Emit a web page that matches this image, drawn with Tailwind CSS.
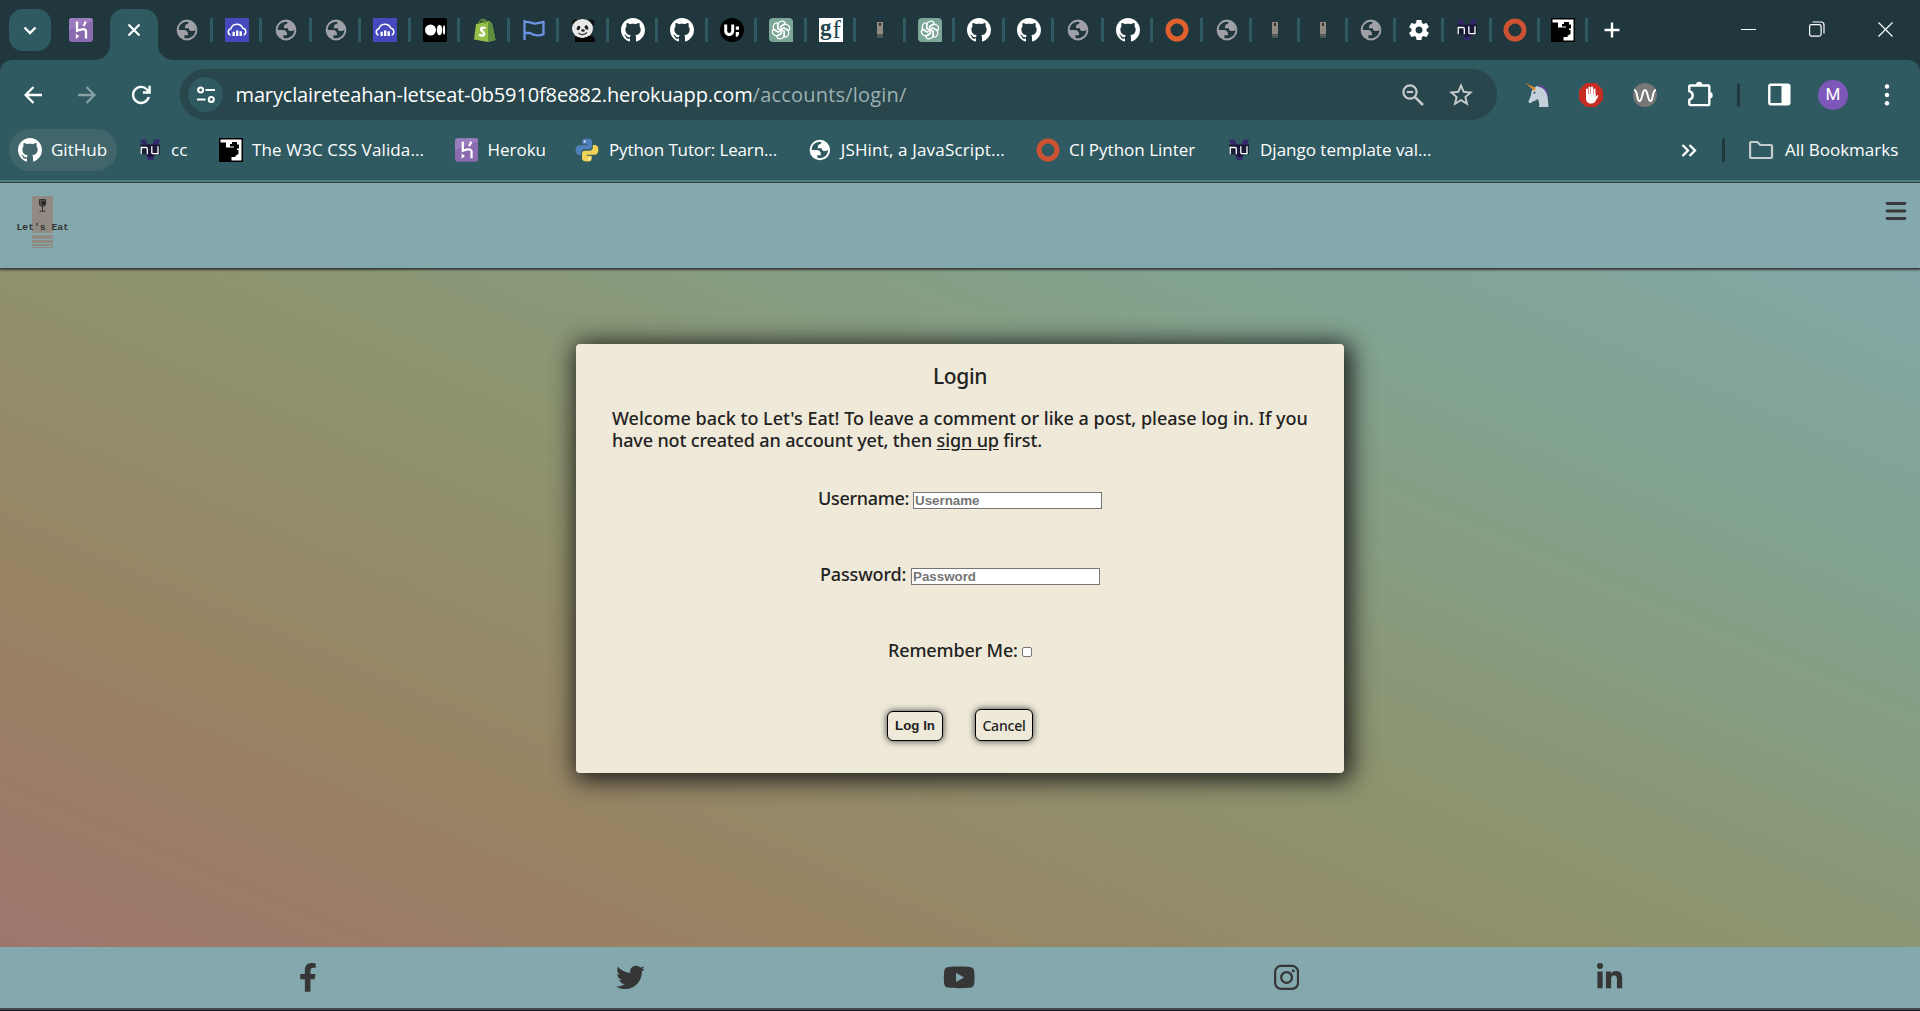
<!DOCTYPE html>
<html lang="en">
<head>
<meta charset="utf-8">
<title>Let's Eat - Login</title>
<script src="https://cdn.jsdelivr.net/npm/@tailwindcss/browser@4"></script>
</head>
<body class="h-[1011px] w-[1920px] overflow-hidden bg-[#1f373d] flex flex-col">

<svg class="hidden">
  <symbol id="heroku" viewBox="0 0 24 24"><rect width="24" height="24" rx="3" fill="#8a6bb0"/><path d="M0 12V3a3 3 0 0 1 3-3h18a3 3 0 0 1 3 3z" fill="#9b7dbd"/><path d="M8 3.500v9.200c2.200-1 9-3 9 .8v7M16.500 3.500c-.2 2-1 3.300-2.200 4.500" fill="none" stroke="#fff" stroke-width="2.300"/><path d="M6.800 15.500l3.400 2.700-3.400 2.700z" fill="#fff"/></symbol>
  <symbol id="globe" viewBox="1.400 1.400 21.200 21.200"><path fill="currentColor" fill-rule="evenodd" d="M12 2a10 10 0 1 0 0 20 10 10 0 0 0 0-20zM4 12h4.400c3.407.022 4.922 1.730 4.543 5.127H9.488v2.470a8.004 8.004 0 0 0 10.498-8.083C19.327 12.504 18.332 13 17 13c-2.137 0-3.206-.916-3.206-2.750h-3.748c-.274-2.728.683-4.092 2.870-4.092 0-.975.327-1.597.811-1.970A8.004 8.004 0 0 0 4 12z"/></symbol>
  <symbol id="cloud" viewBox="0 0 24 24"><rect width="24" height="24" fill="#4549bd"/><path d="M5.500 17a3.200 3.200 0 0 1 .4-6.200A6.300 6.300 0 0 1 17.800 10.300a3.500 3.500 0 0 1 .9 6.700" fill="none" stroke="#fff" stroke-width="1.500"/><path d="M7.500 13.700h2.400v4.200H7.500zM11 12.500h2.400v5.400H11zM14.500 13.200h2.400v4.700h-2.400z" fill="#fff"/></symbol>
  <symbol id="medium" viewBox="0 0 24 24"><rect width="24" height="24" rx="2" fill="#000"/><circle cx="7.500" cy="12" r="5.500" fill="#fff"/><ellipse cx="16.500" cy="12" rx="2.700" ry="5.300" fill="#fff"/><ellipse cx="21" cy="12" rx="1.100" ry="4.800" fill="#fff"/></symbol>
  <symbol id="shopify" viewBox="0 0 24 24"><path d="M4 6l13-3 3 2.500L23.500 22 16 24 2 21.500z" fill="#95bf47"/><path d="M16 4l4 1.500L23.500 22 16 24z" fill="#5e8e3e"/><path d="M7 6c0-4 5-7 6-3v3M10 5c1-4 4-4 5-.5" fill="none" stroke="#5e8e3e" stroke-width="1.200"/><path d="M13.500 10.200c-3-1.300-4.700 0-4.500 1.500.2 1.600 3.400 2 3.200 4.200-.2 2-2.700 2.200-5 .6" fill="none" stroke="#fff" stroke-width="2.400"/></symbol>
  <symbol id="flag" viewBox="0 0 24 24"><path d="M2.500 2v20M2.500 4.500c4-2 7 1.500 11 1 3-.3 5-1 8-1.500v12c-5 3-7.500 1-11 .3-1.500-.3-1.500-1-2-1.300H2.500" fill="none" stroke="#6c92e2" stroke-width="2.300"/></symbol>
  <symbol id="panda" viewBox="0 0 24 24"><circle cx="4" cy="4.500" r="3" fill="#111"/><circle cx="20" cy="5" r="3.500" fill="#111"/><ellipse cx="11.500" cy="10.500" rx="10.500" ry="9.500" fill="#e8e8e8"/><ellipse cx="7.500" cy="10" rx="1.700" ry="2.400" fill="#222" transform="rotate(30 7.500 10)"/><ellipse cx="15.500" cy="9.500" rx="1.700" ry="2.400" fill="#222" transform="rotate(-30 15.500 9.500)"/><ellipse cx="12" cy="12.500" rx="1.800" ry="1.200" fill="#222"/><path d="M7.500 15c2.500 2.300 6 2 8.500-.5" fill="none" stroke="#333" stroke-width="1.300"/><path d="M4 18c4 3 10 2.500 14 0 3-1 6 0 6 6H4z" fill="#050505"/></symbol>
  <symbol id="github" viewBox="0 0 16 16"><path fill="#fff" d="M8 0C3.580 0 0 3.580 0 8c0 3.540 2.290 6.530 5.470 7.590.4.070.55-.17.55-.38 0-.19-.01-.82-.01-1.490-2.010.37-2.530-.49-2.690-.94-.09-.23-.48-.94-.82-1.130-.28-.15-.68-.52-.01-.53.63-.01 1.080.58 1.230.82.72 1.210 1.870.87 2.330.66.07-.52.28-.87.51-1.070-1.780-.2-3.640-.89-3.640-3.950 0-.87.31-1.590.82-2.150-.08-.2-.36-1.020.08-2.120 0 0 .67-.21 2.200.82.64-.18 1.320-.27 2-.27s1.360.09 2 .27c1.530-1.040 2.200-.82 2.200-.82.44 1.100.16 1.920.08 2.120.51.56.82 1.270.82 2.150 0 3.070-1.870 3.750-3.650 3.950.29.25.54.73.54 1.480 0 1.070-.01 1.930-.01 2.200 0 .21.15.46.55.38A8.010 8.010 0 0 0 16 8c0-4.420-3.580-8-8-8z"/></symbol>
  <symbol id="uicon" viewBox="0 0 24 24"><circle cx="12" cy="12" r="12" fill="#000"/><path d="M5.700 6.500v6.500c0 4.500 7 4.500 7 0V6.500" fill="none" stroke="#fff" stroke-width="3"/><path d="M15.800 8.500h3.200v3.200h-3.200zM15.800 14h3.200v2.500l-1.500 2.300h-1.700z" fill="#fff"/></symbol>
  <symbol id="gpt" viewBox="0 0 24 24"><path d="M4 0h16a4 4 0 0 1 4 4v20H4a4 4 0 0 1-4-4V4a4 4 0 0 1 4-4z" fill="#7ba698"/><g fill="none" stroke="#fff" stroke-width="1.250"><path id="petal" d="M9 11.800V7.200c0-4.700 6.300-5.300 7.200-1.600L11.800 8.200v5.300"/><use href="#petal" transform="rotate(60 12 12)"/><use href="#petal" transform="rotate(120 12 12)"/><use href="#petal" transform="rotate(180 12 12)"/><use href="#petal" transform="rotate(240 12 12)"/><use href="#petal" transform="rotate(300 12 12)"/></g></symbol>
  <symbol id="gf" viewBox="0 0 24 24"><rect width="24" height="24" fill="#fff"/><text x="1" y="17" font-family="Liberation Serif, serif" font-size="23" font-weight="700" fill="#22454c">g</text><text x="13.500" y="19.500" font-family="Liberation Serif, serif" font-size="25" fill="#22454c">f</text></symbol>
  <symbol id="bottle" viewBox="0 0 24 24"><path d="M9 4h6v12H9z" fill="#918a82"/><path d="M9 16.500h6v1.200H9zM9 18.400h6v1H9z" fill="#77746f"/><path d="M11 5h2v3h-2z" fill="#333"/></symbol>
  <symbol id="ring" viewBox="0 0 24 24"><circle cx="12" cy="12" r="9" fill="none" stroke="currentColor" stroke-width="5"/></symbol>
  <symbol id="gear" viewBox="1.600 1.600 20.800 20.800"><path fill="#fff" d="M19.430 12.980c.04-.32.07-.64.07-.98s-.03-.66-.07-.98l2.110-1.650c.19-.15.24-.42.12-.64l-2-3.460c-.12-.22-.39-.3-.61-.22l-2.490 1c-.52-.4-1.080-.73-1.690-.98l-.38-2.650A.488.488 0 0 0 14 2h-4c-.25 0-.46.18-.49.42l-.38 2.650c-.61.25-1.170.59-1.690.98l-2.490-1c-.23-.09-.49 0-.61.22l-2 3.460c-.13.22-.07.49.12.64l2.110 1.650c-.04.32-.07.65-.07.98s.03.66.07.98l-2.110 1.650c-.19.15-.24.42-.12.64l2 3.460c.12.22.39.3.61.22l2.490-1c.52.4 1.080.73 1.690.98l.38 2.650c.03.24.24.42.49.42h4c.25 0 .46-.18.49-.42l.38-2.650c.61-.25 1.170-.59 1.690-.98l2.490 1c.23.09.49 0 .61-.22l2-3.460c.12-.22.07-.49-.12-.64l-2.110-1.650zM12 15.500c-1.930 0-3.500-1.570-3.500-3.500s1.570-3.500 3.500-3.500 3.500 1.570 3.500 3.500-1.570 3.500-3.500 3.500z"/></symbol>
  <symbol id="nu" viewBox="0 0 24 24"><path d="M2 1.500h5.500l2 5h5l2-5H22L15 22h-5z" fill="#33286b"/><path d="M2 6.500h20v10h-5.500l-2 2.500h-4l-2-2.500H2z" fill="#111325" opacity=".75"/><path d="M3.200 16.300V9.500h4.900c.9 0 1.200.3 1.200 1.200v5.600M13.800 8.200v6.200c0 .9.300 1.200 1.200 1.200h5V8.200" fill="none" stroke="#fff" stroke-width="1.300"/></symbol>
  <symbol id="w3c" viewBox="0 0 24 24"><rect width="24" height="24" fill="#000"/><path d="M1.500 1.500h21v21H12.500v-3.500h4v-1.500l3-1.500v-4h-1.500v-1.500H20V6.500h-2V4h-5v2h-2v2.500h4v1H7V4.500H1.500z" fill="#fff"/><path d="M13 11h5v6l-4 1h-3z" fill="#000"/></symbol>
  <symbol id="python" viewBox="0 0 24 24"><path d="M11.800.5C7.500.5 7.300 2 7.300 3.500v2.700h5v1H4.500C2.200 7.200.6 8.800.6 12s1.400 4.900 3.400 4.900h2.200v-2.700c0-1.700 1.500-3 3.300-3h5c1.500 0 2.500-1.100 2.500-2.600V3.500c0-2-1.800-3-5.200-3z" fill="#4f7fb8"/><path d="M12.200 23.500c4.300 0 4.500-1.500 4.500-3v-2.700h-5v-1h7.800c2.300 0 3.900-1.600 3.900-4.800s-1.400-4.900-3.400-4.900h-2.200v2.700c0 1.700-1.500 3-3.300 3h-5C8 12.800 7 13.900 7 15.400v5.100c0 2 1.800 3 5.200 3z" fill="#f0d356"/><circle cx="9.600" cy="3.500" r="1" fill="#fff"/><circle cx="14.400" cy="20.500" r="1" fill="#fff"/></symbol>
</svg>

<!-- Tab strip -->
<div class="h-[60px] shrink-0 flex items-center bg-[#1f373d]">
  <div class="ml-[9px] size-[42px] rounded-[14px] bg-[#2f5a61] flex items-center justify-center">
    <svg class="size-[18px]" viewBox="0 0 18 18" fill="none" stroke="#fff" stroke-width="2.400"><path d="M3.500 6.500L9 12l5.500-5.500"/></svg>
  </div>
  <svg class="size-6 ml-[18px]"><use href="#heroku"/></svg>
  <div class="relative ml-[17px] w-12 h-[51px] self-end rounded-t-[14px] bg-[#2f5a61] flex items-center justify-center">
    <svg class="absolute -left-[15px] bottom-0 size-[15px]" viewBox="0 0 15 15"><path d="M15 0v15H0A15 15 0 0 0 15 0z" fill="#2f5a61"/></svg>
    <svg class="absolute -right-[15px] bottom-0 size-[15px]" viewBox="0 0 15 15"><path d="M0 0v15h15A15 15 0 0 1 0 0z" fill="#2f5a61"/></svg>
    <svg class="size-[14px] mb-[9px] -ml-px" viewBox="0 0 14 14" stroke="#fff" stroke-width="2.200"><path d="M1.500 1.500l11 11M12.500 1.500l-11 11"/></svg>
  </div>
  <div id="tabs" class="ml-[5px] flex text-[#9fa1a6]"></div>
  <svg class="ml-[16px] size-4" viewBox="0 0 16 16" stroke="#fff" stroke-width="2.400"><path d="M8 .5v15M.5 8h15"/></svg>
  <div class="ml-auto mr-[27px] flex items-center gap-[53px] pb-0.5">
    <svg class="size-[15px]" viewBox="0 0 15 15" stroke="#fff"><path d="M0 7.500h15"/></svg>
    <svg class="size-[16px]" viewBox="0 0 16 16" fill="none" stroke="#fff" stroke-width="1.200"><rect x=".6" y="3.600" width="11.500" height="11.500" rx="1.800"/><path d="M3.500 1h8.500a3 3 0 0 1 3 3v8.500"/></svg>
    <svg class="size-[15px]" viewBox="0 0 15 15" stroke="#fff" stroke-width="1.200"><path d="M.5.500l14 14M14.500.500l-14 14"/></svg>
  </div>
</div>

<!-- Toolbar and bookmarks -->
<div class="h-[120px] shrink-0 rounded-t-[12px] bg-[#2f5a61] font-['Open_Sans',sans-serif] text-white">
  <div class="h-[69px] flex items-center">
    <svg class="ml-[24px] size-[18px]" viewBox="0 0 18 18" fill="none" stroke="#fff" stroke-width="2.300"><path d="M18 9H2M9.500 1L1.600 9l7.900 8"/></svg>
    <svg class="ml-[36px] size-[18px]" viewBox="0 0 18 18" fill="none" stroke="#86a0a4" stroke-width="2.300"><path d="M0 9h16M8.500 1l7.900 8-7.900 8"/></svg>
    <svg class="ml-[35px] size-5" viewBox="0 0 20 20" fill="none" stroke="#fff" stroke-width="2.400"><path d="M17.800 12A8 8 0 1 1 16 4.500l2 2"/><path d="M18.600.8v6.700h-6.700" /></svg>
    <div class="ml-[29px] w-[1317px] h-[51px] rounded-full bg-[#28464b] flex items-center pl-2">
      <div class="size-[35px] rounded-full bg-[#2f5a61] flex items-center justify-center">
        <svg class="size-[18px]" viewBox="0 0 18 18" fill="none" stroke="#fff" stroke-width="2.100"><circle cx="3.600" cy="4" r="2.500"/><path d="M8.500 4H18M0 13.500h8.500"/><circle cx="14.300" cy="13.500" r="2.500"/></svg>
      </div>
      <div class="ml-[12.500px] text-[20px] whitespace-nowrap flex"><span class="tracking-[-0.140px]">maryclaireteahan-letseat-0b5910f8e882.herokuapp.com</span><span class="text-[#9db1b4] tracking-[0.200px]">/accounts/login/</span></div>
      <svg class="ml-auto size-[22px]" viewBox="0 0 22 22" fill="none" stroke="#c7cbcc" stroke-width="2.200"><circle cx="8" cy="8" r="6.600"/><path d="M12.800 12.800l8.200 8.200" stroke-width="2.500"/><path d="M4.800 8h6.400"/></svg>
      <svg class="ml-[25px] mr-[24px] size-6" viewBox="0 0 24 24"><path fill="#c7cbcc" d="M22 9.240l-7.190-.62L12 2 9.190 8.630 2 9.240l5.460 4.730L5.820 21 12 17.270 18.180 21l-1.630-7.030L22 9.240zM12 15.400l-3.760 2.270 1-4.280-3.320-2.880 4.380-.38L12 6.100l1.710 4.040 4.380.38-3.320 2.880 1 4.280L12 15.400z" transform="translate(-2.400 -2.400) scale(1.200)"/></svg>
    </div>
    <svg class="ml-[28px] size-6" viewBox="0 0 24 24"><path d="M14 2c6 1 9 5 9.500 14l-4-3-5-9z" fill="#6b3fa0"/><path d="M9 5l3-2 5 2c5 3 6 8 6.500 19H14c.5-4 0-6-1.500-8-2 2-4.500 2-6 3.500-1.500 1-3 .5-3-1l2.500-6C6 9 7 7 9 5z" fill="#c4d1db"/><path d="M10 8l-10-8 10.500 5z" fill="#f08a24"/><circle cx="9.500" cy="9.800" r="1" fill="#2f4550"/></svg>
    <svg class="ml-[30px] size-6" viewBox="0 0 24 24"><path d="M7 0h10l7 7v10l-7 7H7l-7-7V7z" fill="#c72e23"/><g stroke="#fff" stroke-width="2" stroke-linecap="round"><path d="M8 13V6.500M10.500 12V4.500M13 12V4.500M15.500 13V6.500"/></g><path d="M7 11h9.500v3l1.300-1.500c1-.8 1.800 0 1.300 1l-2.800 5c-1 1.500-2.500 2-4.300 2-3.500 0-5-2.300-5-5z" fill="#fff"/></svg>
    <svg class="ml-[30px] size-6" viewBox="0 0 24 24"><circle cx="12" cy="12" r="12" fill="#777"/><path d="M1 7c4 0 2.500 11 5.500 11S9 7 12 7s2.500 11 5.500 11S19 7 23 7" fill="none" stroke="#fff" stroke-width="2"/></svg>
    <svg class="ml-[30px] size-[26px] -mt-0.5" viewBox="0 0 26 26" fill="none" stroke="#fff" stroke-width="2.400"><path d="M3.500 4.500h18a.8.8 0 0 1 .8.800v18a.8.8 0 0 1-.8.800h-18a1.200 1.200 0 0 1-1.200-1.200v-4c4.500-1.500 4.500-7.200 0-8.700v-4a1.200 1.200 0 0 1 1.200-1.700z"/><path d="M9 4a3.200 3.200 0 0 1 6.400 0zM22.500 11a3.200 3.200 0 0 1 0 6.400z" fill="#fff" stroke="none"/></svg>
    <div class="ml-[24px] h-6 w-[3px] rounded bg-[#1f373d]"></div>
    <svg class="ml-[28px] size-[23px]" viewBox="0 0 23 23"><rect x="1.300" y="1.800" width="20" height="19.500" rx="1.500" fill="none" stroke="#fff" stroke-width="2.400"/><path d="M13.500 2h8v19h-8z" fill="#fff"/></svg>
    <div class="ml-[27px] size-[30px] rounded-full bg-[#7e57ba] flex items-center justify-center font-['Roboto',sans-serif] text-[17px]">M</div>
    <svg class="ml-[27px] size-6" viewBox="0 0 24 24" fill="#fff"><circle cx="12" cy="3.500" r="2.200"/><circle cx="12" cy="12" r="2.200"/><circle cx="12" cy="20.300" r="2.200"/></svg>
  </div>
  <div class="h-[42px] flex items-center text-[17px] whitespace-nowrap">
    <div class="ml-[9px] w-[108px] h-[42px] rounded-full bg-[#40666c] flex items-center pl-[9px] gap-[9px]"><svg class="size-6"><use href="#github"/></svg>GitHub</div>
    <div class="ml-[21px] w-[50px] flex items-center gap-[9px]"><svg class="size-6"><use href="#nu"/></svg>cc</div>
    <div class="ml-[31px] w-[206px] flex items-center gap-[9px] tracking-[0.130px]"><svg class="size-6"><use href="#w3c"/></svg>The W3C CSS Valida...</div>
    <div class="ml-[30px] w-[91px] flex items-center gap-[9px]"><svg class="size-6"><use href="#heroku"/></svg>Heroku</div>
    <div class="ml-[29px] w-[202px] flex items-center gap-[10px] tracking-[-0.130px]"><svg class="size-6"><use href="#python"/></svg>Python Tutor: Learn...</div>
    <div class="ml-[31px] w-[197px] flex items-center gap-[9px] tracking-[0.170px]"><svg class="size-6 p-px"><use href="#globe"/></svg>JSHint, a JavaScript...</div>
    <div class="ml-[31px] w-[161px] flex items-center gap-[9px]"><svg class="size-6 text-[#cb5333]"><use href="#ring"/></svg>CI Python Linter</div>
    <div class="ml-[30px] w-[206px] flex items-center gap-[9px]"><svg class="size-6"><use href="#nu"/></svg>Django template val...</div>
    <svg class="ml-auto w-[16px] h-[13px]" viewBox="0 0 16 13" fill="none" stroke="#fff" stroke-width="2.300"><path d="M1.500 1L7 6.500 1.500 12M8.500 1L14 6.500 8.500 12"/></svg>
    <div class="ml-[25px] h-6 w-[3px] rounded bg-[#1f373d]"></div>
    <svg class="ml-[23px] w-[26px] h-[20px]" viewBox="0 0 26 20" fill="none" stroke="#c7cbcc" stroke-width="2.200"><path d="M3.300 2h6l3 3h10.500c.8 0 1.200.4 1.200 1.200v10.600c0 .8-.4 1.200-1.200 1.200H3.300c-.8 0-1.200-.4-1.200-1.200V3.200c0-.8.400-1.200 1.200-1.200z"/></svg>
    <div class="ml-[11px] w-[113px] mr-[22px]">All Bookmarks</div>
  </div>
</div>

<!-- Page -->
<div class="h-[2px] shrink-0 bg-[#4f7f87]"></div>
<div class="grow flex flex-col bg-[linear-gradient(to_top_right,#a0736f_0%,#998363_25%,#8d946f_50%,#82a38f_75%,#83a8ad_100%)]">
  <header class="h-[87px] shrink-0 flex justify-between border-t border-b border-[#3c3c3c] bg-[#83a8ad] shadow-[0_1px_2px_#3c3c3c]">
    <svg class="ml-[16px] mt-[13px] w-[54px] h-[52px]" viewBox="0 0 54 52">
      <path d="M16 0h21v37H16zM16 39h21v4H16zM16 44h21v3H16zM16 48h21v2H16zM16 51h21v1H16z" fill="#918a82"/>
      <path d="M23.500 3.500h6v4.500c0 1.500-1.200 2.500-3 2.500s-3-1-3-2.500z" fill="#555350" stroke="#333" stroke-width="1"/><path d="M25.500 5h3.500v4h-3.500z" fill="#2a2a2a"/><path d="M26.500 11v4M23.500 15.200h6" stroke="#333" stroke-width="1"/>
      <text x=".5" y="34" font-family="Liberation Mono, monospace" font-size="9.700" font-weight="700" fill="#333">Let's Eat</text>
    </svg>
    <svg class="mr-[13px] mt-[18px] w-[22px] h-[20px]" viewBox="0 0 22 20" fill="none" stroke="#3a3a3a" stroke-width="2.800" stroke-linecap="round"><path d="M2 2.500h18M2 10h18M2 17.500h18"/></svg>
  </header>

  <main class="grow">
    <section class="mx-auto mt-[75px] w-[768px] h-[429px] rounded-[4px] bg-[#efe9d9] shadow-[3px_3px_24px_4px_#1c1c1c] flex flex-col items-center font-['Noto_Sans',sans-serif] font-medium text-[#222] text-[18px] leading-[28px]">
      <h1 class="mt-[18px] h-7 text-[21px] tracking-[-0.400px]">Login</h1>
      <p class="mt-[17px] w-[696px] h-11 leading-[22px] whitespace-nowrap"><span class="tracking-[-0.010px]">Welcome back to Let's Eat! To leave a comment or like a post, please log in. If you</span><br><span class="tracking-[-0.140px]">have not created an account yet, then <a class="underline underline-offset-[2px]">sign up</a> first.</span></p>
      <form class="contents">
        <div class="mt-[33px] h-7 flex items-center"><label class="w-[91px] tracking-[-0.300px]">Username:</label><input class="ml-1 mt-[5px] w-[189px] h-[17px] border border-[#767676] bg-white px-px font-['Liberation_Sans',sans-serif] font-bold text-[13.330px] leading-[15px] placeholder:text-[#757575]" placeholder="Username"></div>
        <div class="mt-12 h-7 flex items-center"><label class="w-[87px] tracking-[-0.150px]">Password:</label><input class="ml-1 mt-[5px] w-[189px] h-[17px] border border-[#767676] bg-white px-px font-['Liberation_Sans',sans-serif] font-bold text-[13.330px] leading-[15px] placeholder:text-[#757575]" placeholder="Password"></div>
        <div class="mt-12 h-7 flex items-center"><label class="w-[130px] whitespace-nowrap tracking-[-0.150px]">Remember Me:</label><span class="ml-1 mt-1 size-[10px] rounded-[2px] border border-[#767676] bg-white"></span></div>
        <div class="mt-[45px] h-8 flex items-end gap-8 text-[#222]">
          <button class="w-14 h-[30px] rounded-[6px] border border-black bg-[#efe9d9] shadow-[0_0_7px_#333] font-['Liberation_Sans',sans-serif] font-bold text-[13.330px] leading-none">Log In</button>
          <a class="w-[58px] h-8 rounded-[6px] border border-black bg-[#efe9d9] shadow-[0_0_7px_#333] flex items-center justify-center text-[14px] tracking-[-0.200px] pt-0.5">Cancel</a>
        </div>
      </form>
    </section>
  </main>

  <footer class="h-[61px] shrink-0 bg-[#83a8ad] flex items-center gap-[298.500px] pl-[299px] text-[#363636]">
    <svg class="w-[18px] h-[28.800px] shrink-0 overflow-visible" viewBox="0 0 320 512" fill="currentColor"><path d="M279.140 288l14.220-92.660h-88.910v-60.130c0-25.350 12.420-50.060 52.240-50.060h40.420V6.260S260.430 0 225.360 0c-73.220 0-121.080 44.380-121.080 124.720v70.620H22.890V288h81.390v224h100.170V288z"/></svg>
    <svg class="size-[28.800px] shrink-0" viewBox="0 0 512 512" fill="currentColor"><path d="M459.370 151.716c.325 4.548.325 9.097.325 13.645 0 138.720-105.583 298.558-298.558 298.558-59.452 0-114.680-17.219-161.137-47.106 8.447.974 16.568 1.299 25.340 1.299 49.055 0 94.213-16.568 130.274-44.832-46.132-.975-84.792-31.188-98.112-72.772 6.498.974 12.995 1.624 19.818 1.624 9.421 0 18.843-1.300 27.614-3.573-48.081-9.747-84.143-51.980-84.143-102.985v-1.299c13.969 7.797 30.214 12.670 47.431 13.319-28.264-18.843-46.781-51.005-46.781-87.391 0-19.492 5.197-37.360 14.294-52.954 51.655 63.675 129.300 105.258 216.365 109.807-1.624-7.797-2.599-15.918-2.599-24.040 0-57.828 46.782-104.934 104.934-104.934 30.213 0 57.502 12.670 76.670 33.137 23.715-4.548 46.456-13.320 66.599-25.340-7.798 24.366-24.366 44.833-46.132 57.827 21.117-2.273 41.584-8.122 60.426-16.243-14.292 20.791-32.161 39.308-52.628 54.253z"/></svg>
    <svg class="w-[32.400px] h-[28.800px] shrink-0" viewBox="0 0 576 512" fill="currentColor"><path d="M549.655 124.083c-6.281-23.650-24.787-42.276-48.284-48.597C458.781 64 288 64 288 64S117.220 64 74.629 75.486c-23.497 6.322-42.003 24.947-48.284 48.597-11.412 42.867-11.412 132.305-11.412 132.305s0 89.438 11.412 132.305c6.281 23.650 24.787 41.500 48.284 47.821C117.220 448 288 448 288 448s170.780 0 213.371-11.486c23.497-6.321 42.003-24.171 48.284-47.821 11.412-42.867 11.412-132.305 11.412-132.305s0-89.438-11.412-132.305zm-317.510 213.508V175.185l142.739 81.205-142.739 81.201z"/></svg>
    <svg class="w-[25.200px] h-[28.800px] shrink-0" viewBox="0 0 448 512" fill="none" stroke="currentColor" stroke-width="40"><rect x="20" y="52" width="408" height="408" rx="108"/><circle cx="224" cy="256" r="96"/><circle cx="343" cy="137" r="27" fill="currentColor" stroke="none"/></svg>
    <svg class="w-[25.200px] h-[28.800px] shrink-0" viewBox="0 0 448 512" fill="currentColor"><path d="M100.280 448H7.400V148.900h92.880zM53.790 108.100C24.090 108.100 0 83.500 0 53.800a53.790 53.790 0 0 1 107.580 0c0 29.700-24.100 54.300-53.790 54.300zM447.900 448h-92.680V302.400c0-34.700-.7-79.200-48.290-79.200-48.290 0-55.690 37.700-55.690 76.700V448h-92.780V148.900h89.080v40.800h1.300c12.400-23.500 42.690-48.300 87.880-48.300 94 0 111.280 61.900 111.280 142.300V448z"/></svg>
  </footer>
  <div class="h-[2px] shrink-0 bg-[#45474b]"></div>
  <div class="h-px shrink-0 bg-[#131523]"></div>
</div>

<script>
const wide = ['globe','cloud','globe','globe','cloud','medium','shopify','flag','panda','github','github','uicon','gpt','gf','bottle','gpt','github','github','globe','github','ring','globe'];
const narrow = ['bottle','bottle','globe','gear','nu','ring','w3c'];
const small = {globe: 'p-px', gear: 'p-[1.5px]'};
const tab = (name, cell, color) => `<div class="${cell} flex items-center"><svg class="size-6 ${small[name] || ''} ${color}"><use href="#${name}"/></svg><div class="ml-auto w-[3px] h-6 bg-[#2f5a61]"></div></div>`;
document.getElementById('tabs').innerHTML =
  wide.map(n => tab(n, 'w-[49.500px] pl-[12px]', n === 'ring' ? 'text-[#e0602f]' : '')).join('') +
  narrow.map(n => tab(n, 'w-12 pl-[10.500px]', n === 'ring' ? 'text-[#cb5333]' : '')).join('');
</script>
</body>
</html>
